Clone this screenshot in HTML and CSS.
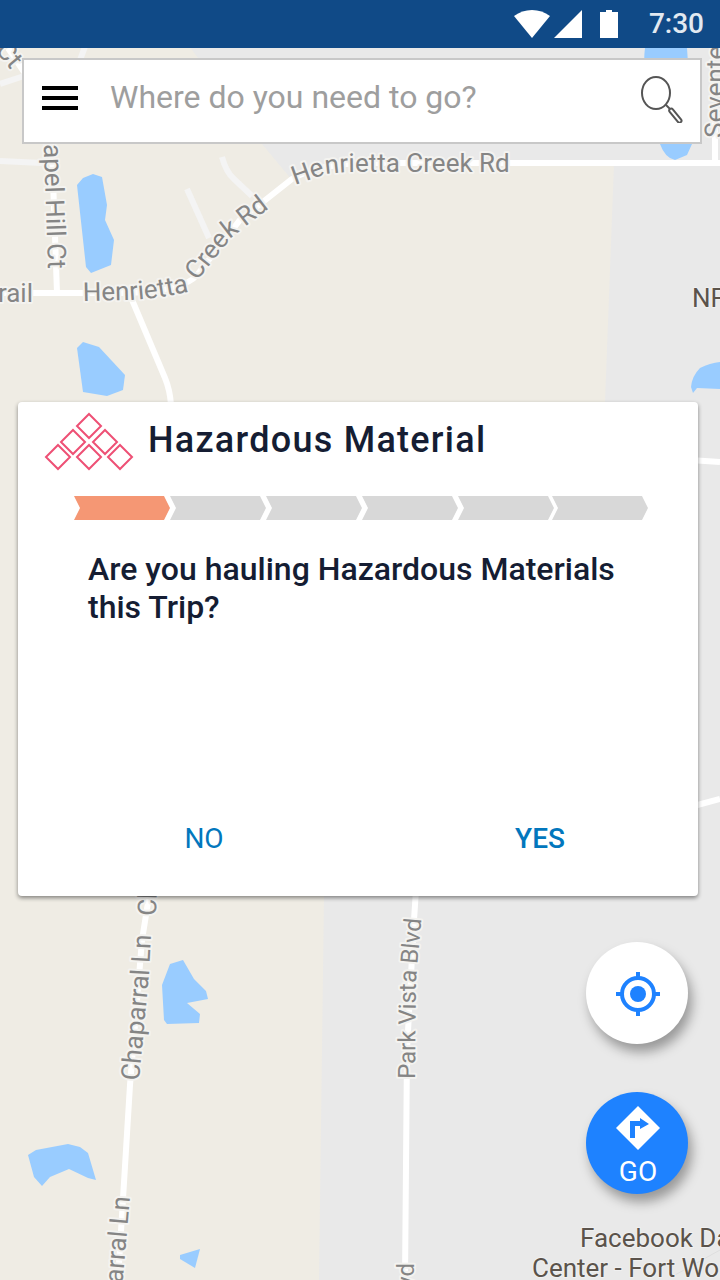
FILE: index.html
```html
<!DOCTYPE html>
<html lang="en">
<head>
<meta charset="utf-8">
<meta name="viewport" content="width=device-width, initial-scale=1">
<title>Hazardous Material</title>
<link rel="stylesheet" href="styles.css">
</head>
<body>
<div class="screen">
  <svg class="map" viewBox="0 0 720 1280" preserveAspectRatio="xMidYMin slice" role="img" aria-label="Map">
    <defs>
      <path id="path-chapel" d="M42 90 L48 269"/>
      <path id="path-henrietta" d="M83 301 L130 300 Q165 298 200 289"/>
      <path id="path-creek" d="M197 281 L232 237 L290 192"/>
      <path id="path-north" d="M295 185 L326 174 Q340 172 354 172 H560"/>
      <path id="path-chap-top" d="M156 916 L160 780"/>
      <path id="path-chap" d="M139 1081 L149 975 L153 900"/>
      <path id="path-chap-low" d="M116 1360 L130 1197"/>
      <path id="path-park" d="M415 1079 L416 980 L423 900"/>
    </defs>
    <path class="land" d="M0 0H155L262 144L292 180L360 164H614L605 402L600 640L325 760L324 896L319 1280H0Z"/>
    <g class="water">
      <path d="M645 48Q642 70 650 110Q656 135 660 144Q665 158 675 160L687 155L692 144Q690 90 687 48Z"/>
      <path d="M77 185L83 178L93 174L102 177L107 205L105 220L114 240L111 265L91 273L86 267Z"/>
      <path d="M77 348L83 342L99 347L125 375L123 390L107 396L83 392Z"/>
      <path d="M162 985L170 964L183 960L194 979L206 991L208 999L187 1003L200 1014L199 1023L167 1024L164 1020Z"/>
      <path d="M28 1155L36 1150L68 1144L80 1147L88 1153L96 1180L88 1178L69 1169L50 1177L42 1186L34 1177Z"/>
      <path d="M180 1255L200 1249L195 1268L180 1259Z"/>
      <path d="M691 387Q692 376 700 368Q710 363 720 362V389L697 388L693 393Z"/>
    </g>
    <g class="road road-minor">
      <path d="M0 161L42 163"/>
      <path d="M222 157Q226 172 234 179L252 196"/>
      <path d="M187 189L209 238"/>
      <path d="M0 84L24 76"/>
      <path d="M86 44L80 60"/>
      <path d="M720 1250L675 1275" class="hairline"/>
    </g>
    <g class="road">
      <path d="M0 293H130Q185 290 197 275L240 220L292 179Q320 163 370 163H720"/>
      <path d="M130 295L165 378Q170 390 171 405"/>
      <path d="M52 150L57 293"/>
      <path d="M8 48L24 72"/>
      <path d="M715 120V163"/>
      <path d="M690 460L720 462"/>
      <path d="M690 807L720 799"/>
      <path d="M150 890L142 940L130 1085L118 1280"/>
      <path d="M416 890L414 920L407 1050L405 1280"/>
    </g>
    <g class="label">
      <text><textPath href="#path-chapel" startOffset="100%" text-anchor="end">Chapel Hill Ct</textPath></text>
      <text><textPath href="#path-henrietta">Henrietta</textPath></text>
      <text><textPath href="#path-creek">Creek Rd</textPath></text>
      <text><textPath href="#path-north">Henrietta Creek Rd</textPath></text>
      <text><textPath href="#path-chap-top">Chaparral</textPath></text>
      <text><textPath href="#path-chap">Chaparral Ln</textPath></text>
      <text><textPath href="#path-chap-low" startOffset="100%" text-anchor="end">Chaparral Ln</textPath></text>
      <text class="label-small"><textPath href="#path-park">Park Vista Blvd</textPath></text>
      <text class="label-small" transform="translate(414 1263) rotate(-90)" text-anchor="end">Park Vista Blvd</text>
      <text transform="translate(723 138) rotate(-89)">Seventeen</text>
      <text transform="translate(11 70) rotate(50)" text-anchor="end">Ct</text>
      <text x="33" y="302" text-anchor="end">Trail</text>
    </g>
    <g class="label label-place">
      <text x="692" y="307">NF</text>
      <text x="580" y="1247">Facebook Data</text>
      <text x="532" y="1277">Center - Fort Worth</text>
    </g>
  </svg>

  <header class="status">
    <svg class="status-icons" viewBox="0 0 104 28" role="img" aria-label="Wi-Fi, signal and battery full">
      <path d="M0 6Q8 0 18 0T36 6L18 28Z"/>
      <path d="M40 28L68 0V28Z"/>
      <path d="M86 2H92V0H98V2H104V28H86Z"/>
    </svg>
    <time class="clock">7:30</time>
  </header>

  <main class="content">
    <form class="search" role="search">
      <button class="icon-button" type="button" aria-label="Menu">
        <svg class="menu-icon" viewBox="0 0 36 24"><path d="M0 0H36V4H0ZM0 10H36V14H0ZM0 20H36V24H0Z"/></svg>
      </button>
      <input class="search-input" type="text" placeholder="Where do you need to go?" aria-label="Where do you need to go?">
      <button class="icon-button" type="submit" aria-label="Search">
        <svg class="search-icon" viewBox="0 -2 44 50">
          <ellipse cx="16" cy="18" rx="14" ry="16"/>
          <path d="M26 30L30 34"/>
          <rect x="-2" y="0" width="4" height="17" rx="2" transform="translate(30 34) rotate(-39)"/>
        </svg>
      </button>
    </form>

    <section class="card" aria-labelledby="card-title">
      <header class="card-header">
        <svg class="hazard-icon" viewBox="0 0 90 60" aria-hidden="true">
          <path d="M45 2L57 14L45 26L33 14Z"/>
          <path d="M29 18L41 30L29 42L17 30ZM61 18L73 30L61 42L49 30Z"/>
          <path d="M14 33L26 45L14 57L2 45ZM45 33L57 45L45 57L33 45ZM76 33L88 45L76 57L64 45Z"/>
        </svg>
        <h1 class="card-title" id="card-title">Hazardous Material</h1>
      </header>
      <ol class="steps" aria-label="Step 1 of 6">
        <li class="step step-current" aria-current="step"></li>
        <li class="step"></li>
        <li class="step"></li>
        <li class="step"></li>
        <li class="step"></li>
        <li class="step"></li>
      </ol>
      <p class="question">Are you hauling Hazardous Materials this Trip?</p>
      <footer class="actions">
        <button class="action" type="button">NO</button>
        <button class="action action-primary" type="button">YES</button>
      </footer>
    </section>

    <div class="fabs">
      <button class="fab" type="button" aria-label="My location">
        <svg class="fab-icon" viewBox="0 0 44 44">
          <circle cx="22" cy="22" r="16" fill="none" stroke="currentColor" stroke-width="4"/>
          <circle cx="22" cy="22" r="8"/>
          <path d="M20 0H24V6H20ZM20 38H24V44H20ZM0 20H6V24H0ZM38 20H44V24H38Z"/>
        </svg>
      </button>
      <button class="fab fab-go" type="button">
        <svg class="fab-icon" viewBox="0 0 44 44" aria-hidden="true">
          <path fill-rule="evenodd" d="M22 0L44 22L22 44L0 22ZM14 15V32H19V20H24V23L33 18L24 12V15Z"/>
        </svg>
        <span>GO</span>
      </button>
    </div>
  </main>
</div>
</body>
</html>
```
FILE: styles.css
```css
* {
  box-sizing: border-box;
}

body {
  margin: 0;
  font-family: Roboto, "Liberation Sans", sans-serif;
  color: #151d33;
}

button {
  margin: 0;
  padding: 0;
  border: 0;
  background: none;
  font: inherit;
  cursor: pointer;
}

svg {
  display: block;
}

.screen {
  position: relative;
  display: flex;
  flex-direction: column;
  min-height: 100vh;
  overflow: hidden;
}

/* Map backdrop */
.map {
  position: absolute;
  inset: 0;
  z-index: -1;
  width: 100%;
  height: 100%;
  background: #e9e9e9;
}

.land {
  fill: #efece4;
}

.water {
  fill: #99ccff;
}

.road {
  fill: none;
  stroke: #fff;
  stroke-width: 6;
}

.road-minor {
  stroke: #f4f4f4;
}

.hairline {
  stroke: #dedede;
  stroke-width: 1;
}

.label {
  font-size: 26px;
  fill: #858585;
  stroke: #f4f3f0;
  stroke-width: 4;
  stroke-linejoin: round;
  paint-order: stroke;
}

.label-small {
  font-size: 24px;
}

.label-place {
  fill: #5b534b;
  stroke: #f0f0f0;
  stroke-width: 2;
}

/* Status bar */
.status {
  display: flex;
  align-items: center;
  justify-content: flex-end;
  gap: 31px;
  height: 48px;
  padding: 0 16px;
  background: #104a87;
}

.status-icons {
  width: 104px;
  height: 28px;
  fill: #fff;
}

.clock {
  font-size: 28px;
  font-weight: 500;
  line-height: 48px;
  color: #e2e9f1;
}

.content {
  display: flex;
  flex: 1;
  flex-direction: column;
  padding: 10px 18px 86px;
}

/* Search bar */
.search {
  display: flex;
  align-items: center;
  gap: 32px;
  height: 86px;
  margin: 0 0 258px 4px;
  padding: 0 16px 6px 18px;
  border: 2px solid #c8c8c8;
  background: #fff;
}

.menu-icon {
  width: 36px;
  height: 24px;
}

.search-input {
  flex: 1;
  min-width: 0;
  padding: 0 0 2px;
  border: 0;
  outline: 0;
  background: none;
  font: inherit;
  font-size: 32px;
  color: #151d33;
}

.search-input::placeholder {
  color: #9e9e9e;
  opacity: 1;
}

.search-icon {
  width: 44px;
  height: 50px;
  fill: none;
  stroke: #555;
  stroke-width: 2;
}

/* Question card */
.card {
  display: flex;
  flex-direction: column;
  min-height: 494px;
  margin-right: 4px;
  padding-top: 10px;
  border-radius: 4px;
  background: #fff;
  box-shadow: 0 2px 4px rgba(0, 0, 0, 0.45);
}

.card-header {
  display: flex;
  align-items: flex-start;
  gap: 14px;
  padding: 0 26px;
}

.hazard-icon {
  flex: none;
  width: 90px;
  height: 60px;
  fill: none;
  stroke: #ee5075;
  stroke-width: 2;
}

.card-title {
  margin: 0;
  font-size: 36px;
  font-weight: 500;
  line-height: 56px;
  letter-spacing: 0.035em;
}

.steps {
  display: flex;
  margin: 24px 50px 0 56px;
  padding: 0;
  list-style: none;
}

.step {
  flex: 1;
  height: 24px;
  background: #d8d8d8;
  clip-path: polygon(0 0, calc(100% - 6px) 0, 100% 50%, calc(100% - 6px) 100%, 0 100%, 6px 50%);
}

.step:last-child {
  margin-left: -2px;
}

.step-current {
  background: #f59774;
}

.question {
  margin: 30px 70px 24px;
  font-size: 32px;
  font-weight: 500;
  line-height: 38px;
}

.actions {
  display: grid;
  grid-template-columns: 1fr 1fr;
  gap: 20px;
  margin-top: auto;
  padding: 0 0 33px 28px;
}

.action {
  justify-self: center;
  min-width: 128px;
  font-size: 28px;
  line-height: 48px;
  color: #0277bd;
}

.action-primary {
  font-weight: 500;
}

/* Floating buttons */
.fabs {
  display: flex;
  flex-direction: column;
  align-items: flex-end;
  gap: 48px;
  margin-top: 46px;
  padding-right: 14px;
}

.fab {
  display: flex;
  flex-direction: column;
  align-items: center;
  justify-content: center;
  width: 102px;
  height: 102px;
  padding: 2px 0 0 2px;
  border-radius: 50%;
  background: #fff;
  color: #1e82ff;
  box-shadow: 4px 8px 12px rgba(0, 0, 0, 0.35);
}

.fab-icon {
  width: 44px;
  height: 44px;
  fill: currentColor;
}

.fab-go {
  gap: 4px;
  padding-top: 10px;
  background: #1e82ff;
  color: #fff;
  font-size: 28px;
  line-height: 36px;
}
```
